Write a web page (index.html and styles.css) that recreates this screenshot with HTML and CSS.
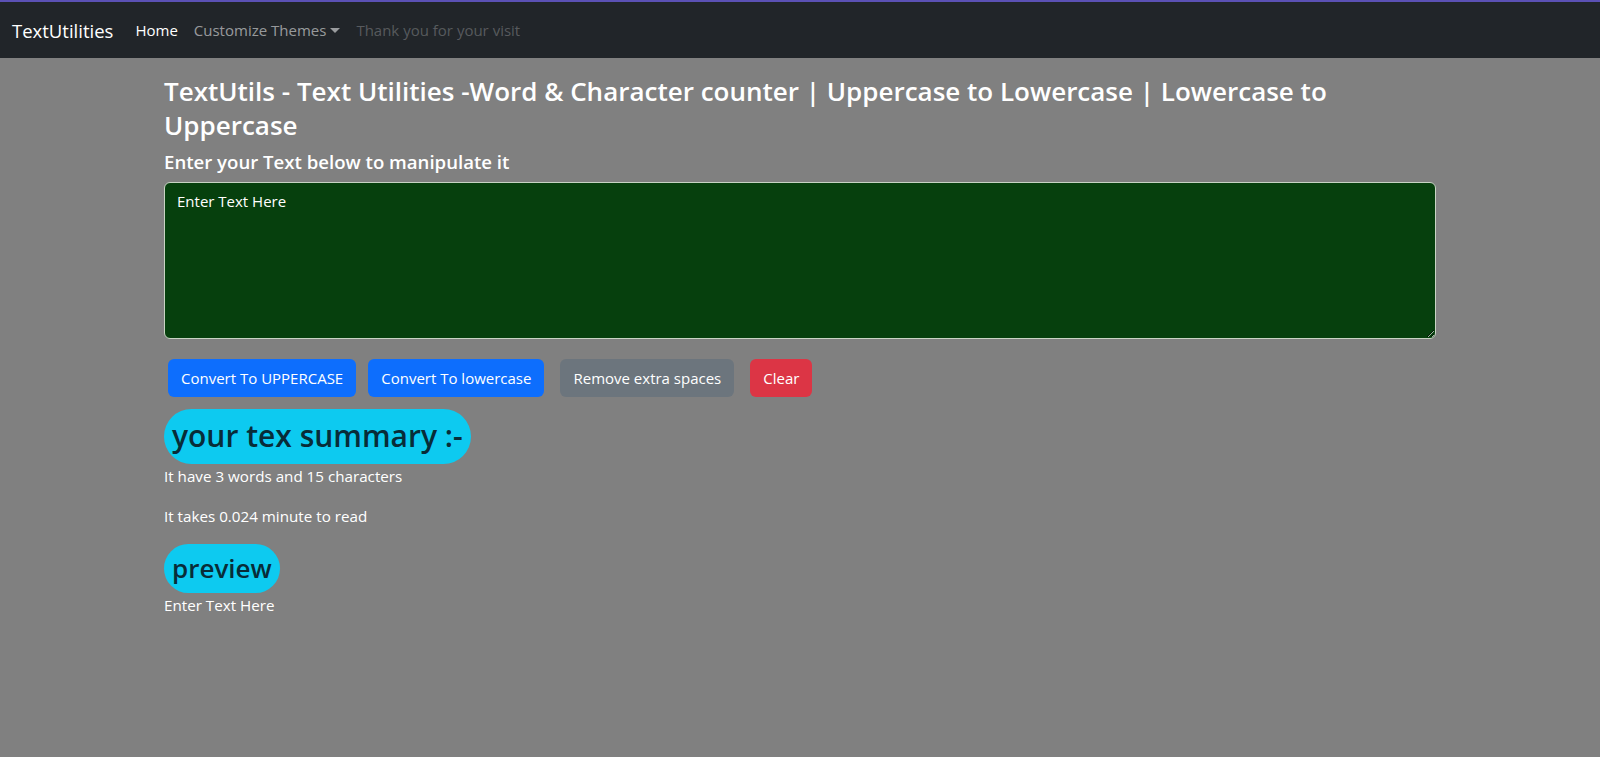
FILE: index.html
```html
<!DOCTYPE html>
<html lang="en">
<head>
<meta charset="utf-8">
<title>TextUtils</title>
<link rel="stylesheet" href="styles.css">
</head>
<body>
<nav class="navbar">
  <a class="brand" href="#">TextUtilities</a>
  <ul class="nav">
    <li><a class="nav-link active" href="#">Home</a></li>
    <li><a class="nav-link dropdown" href="#">Customize Themes<span class="caret"></span></a></li>
    <li><a class="nav-link disabled" href="#">Thank you for your visit</a></li>
  </ul>
</nav>
<main class="container">
  <h1 class="title">TextUtils - Text Utilities -Word &amp; Character counter | Uppercase to Lowercase | Lowercase to Uppercase</h1>
  <h5 class="label">Enter your Text below to manipulate it</h5>
  <textarea class="textbox" rows="6">Enter Text Here</textarea>
  <div class="actions">
    <button class="btn btn-primary">Convert To UPPERCASE</button>
    <button class="btn btn-primary">Convert To lowercase</button>
    <button class="btn btn-secondary">Remove extra spaces</button>
    <button class="btn btn-danger">Clear</button>
  </div>
  <section class="summary">
    <h2 class="pill pill-lg">your tex summary :-</h2>
    <p class="line">It have 3 words and 15 characters</p>
    <p class="line">It takes 0.024 minute to read</p>
    <h3 class="pill pill-md">preview</h3>
    <p class="line last">Enter Text Here</p>
  </section>
</main>
</body>
</html>
```
FILE: styles.css
```css
* { box-sizing: border-box; }
html, body { margin: 0; padding: 0; }
body {
  background: #808080;
  font-family: "Open Sans", "Noto Sans", sans-serif;
  font-size: 16px;
  line-height: 1.5;
  color: #fff;
  min-height: 757px;
}
.navbar {
  display: flex;
  align-items: center;
  height: 58px;
  background: #212529;
  border-top: 2px solid #5b51b5;
  padding: 1px 12px 0;
}
.brand {
  font-size: 18.5px;
  color: #fff;
  text-decoration: none;
  margin-right: 14px;
  line-height: 30px;
}
.nav {
  display: flex;
  list-style: none;
  margin: 0;
  padding: 0;
}
.nav-link {
  display: block;
  padding: 8px 8px;
  font-size: 15px;
  text-decoration: none;
  color: rgba(255,255,255,.55);
}
.nav-link.active { color: #fff; }
.nav-link.disabled { color: rgba(255,255,255,.25); }
.caret {
  display: inline-block;
  margin-left: 4px;
  vertical-align: 3px;
  border-top: 5px solid currentColor;
  border-left: 5px solid transparent;
  border-right: 5px solid transparent;
}
.container {
  width: 1272px;
  margin: 0 auto;
  padding: 17px 0 0;
}
.title {
  font-size: 26px;
  font-weight: 600;
  line-height: 33.6px;
  margin: 0 0 8px;
}
.label {
  font-size: 18.6px;
  font-weight: 600;
  line-height: 24px;
  margin: 0 0 8px;
}
.textbox {
  display: block;
  width: 100%;
  height: 157px;
  background: #06400d;
  color: #fff;
  border: 1px solid #c8d4c4;
  border-radius: 6px;
  padding: 6px 12px;
  font-family: inherit;
  font-size: 15px;
  line-height: 24px;
  resize: vertical;
}
.actions {
  display: flex;
  margin-top: 20px;
  padding-left: 4px;
}
.btn {
  font-family: inherit;
  font-size: 15px;
  line-height: 24px;
  padding: 6px 12px;
  border: 1px solid transparent;
  border-radius: 6px;
  color: #fff;
  height: 38px;
  margin-right: 12px;
}
.btn-primary { background: #0d6efd; }
.btn-secondary { background: #6c757d; margin-left: 4px; margin-right: 16px; }
.btn-danger { background: #dc3545; }
.summary { margin-top: 12px; }
.pill {
  display: inline-block;
  background: #0dcaf0;
  color: #082c38;
  border-radius: 50rem;
  padding: 8px 8px;
  margin: 0;
  font-weight: 600;
}
.pill-lg { font-size: 30px; line-height: 38.4px; }
.pill-md { font-size: 26px; line-height: 33.6px; }
.line { margin: 0 0 16px; font-size: 15.2px; line-height: 24px; }
.line.last { margin: 0; }
```
